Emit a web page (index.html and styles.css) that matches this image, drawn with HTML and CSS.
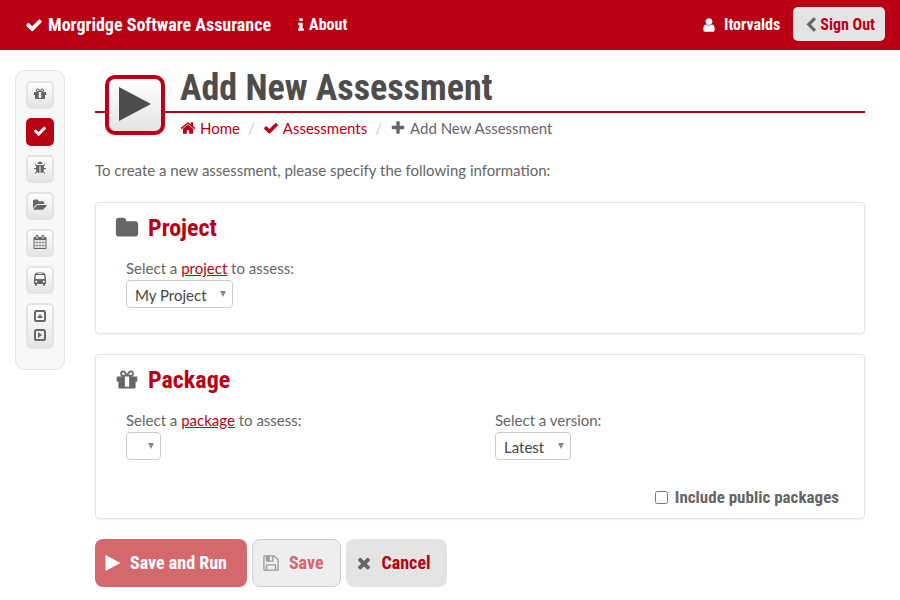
FILE: index.html
```html
<!DOCTYPE html>
<html lang="en">
<head>
<meta charset="utf-8">
<meta name="viewport" content="width=device-width, initial-scale=1">
<title>Add New Assessment</title>
<link rel="stylesheet" href="styles.css">
</head>
<body>
<svg class="sprite" aria-hidden="true">
  <symbol id="check" viewBox="0 0 1792 1792"><path d="M1671 566q0 40-28 68l-724 724-136 136q-28 28-68 28t-68-28l-136-136-362-362q-28-28-28-68t28-68l136-136q28-28 68-28t68 28l294 295 656-657q28-28 68-28t68 28l136 136q28 28 28 68z"/></symbol>
  <symbol id="info" viewBox="0 0 1792 1792"><path d="M1216 1344v128q0 26-19 45t-45 19h-512q-26 0-45-19t-19-45v-128q0-26 19-45t45-19h64v-384h-64q-26 0-45-19t-19-45v-128q0-26 19-45t45-19h384q26 0 45 19t19 45v576h64q26 0 45 19t19 45zm-128-1152v192q0 26-19 45t-45 19h-256q-26 0-45-19t-19-45v-192q0-26 19-45t45-19h256q26 0 45 19t19 45z"/></symbol>
  <symbol id="user" viewBox="0 0 1792 1792"><path d="M1536 1399q0 109-62.5 187t-150.5 78h-854q-88 0-150.5-78t-62.5-187q0-85 8.5-160.5t31.500-152 58.500-131 94-89 134.500-34.500q131 128 313 128t313-128q76 0 134.500 34.500t94 89 58.500 131 31.500 152 8.500 160.500zm-256-887q0 159-112.500 271.500t-271.500 112.500-271.500-112.500-112.500-271.500 112.500-271.500 271.500-112.500 271.500 112.500 112.500 271.500z"/></symbol>
  <symbol id="chevron" viewBox="0 0 1792 1792"><path d="M1427 301l-531 531 531 531q19 19 19 45t-19 45l-166 166q-19 19-45 19t-45-19l-742-742q-19-19-19-45t19-45l742-742q19-19 45-19t45 19l166 166q19 19 19 45t-19 45z"/></symbol>
  <symbol id="home" viewBox="0 0 1792 1792"><path d="M1472 992v480q0 26-19 45t-45 19h-384v-384h-256v384h-384q-26 0-45-19t-19-45v-480q0-1 .5-3t.5-3l575-474 575 474q1 2 1 6zm223-69l-62 74q-8 9-21 11h-3q-13 0-21-7l-692-577-692 577q-12 8-24 7-13-2-21-11l-62-74q-8-10-7-23.5t11-21.5l719-599q32-26 76-26t76 26l244 204v-195q0-14 9-23t23-9h192q14 0 23 9t9 23v408l219 182q10 8 11 21.5t-7 23.5z"/></symbol>
  <symbol id="plus" viewBox="0 0 1792 1792"><path d="M1600 736v192q0 40-28 68t-68 28h-416v416q0 40-28 68t-68 28h-192q-40 0-68-28t-28-68v-416h-416q-40 0-68-28t-28-68v-192q0-40 28-68t68-28h416v-416q0-40 28-68t68-28h192q40 0 68 28t28 68v416h416q40 0 68 28t28 68z"/></symbol>
  <symbol id="times" viewBox="0 0 1792 1792"><path d="M1490 1322q0 40-28 68l-136 136q-28 28-68 28t-68-28l-294-294-294 294q-28 28-68 28t-68-28l-136-136q-28-28-28-68t28-68l294-294-294-294q-28-28-28-68t28-68l136-136q28-28 68-28t68 28l294 294 294-294q28-28 68-28t68 28l136 136q28 28 28 68t-28 68l-294 294 294 294q28 28 28 68z"/></symbol>
  <symbol id="folder" viewBox="0 0 1792 1792"><path d="M1728 608v704q0 92-66 158t-158 66h-1216q-92 0-158-66t-66-158v-960q0-92 66-158t158-66h320q92 0 158 66t66 158v32h672q92 0 158 66t66 158z"/></symbol>
  <symbol id="gift" viewBox="0 0 1792 1792"><path d="M1056 1356v-716h-320v716q0 25 18 38.5t46 13.5h192q28 0 46-13.5t18-38.5zm-456-844h195l-126-161q-26-31-69-31-40 0-68 28t-28 68 28 68 68 28zm688-96q0-40-28-68t-68-28q-43 0-69 31l-125 161h194q40 0 68-28t28-68zm376 256v320q0 14-9 23t-23 9h-96v416q0 40-28 68t-68 28h-1088q-40 0-68-28t-28-68v-416h-96q-14 0-23-9t-9-23v-320q0-14 9-23t23-9h440q-93 0-158.5-65.5t-65.5-158.5 65.5-158.5 158.5-65.5q107 0 168 77l128 165 128-165q61-77 168-77 93 0 158.5 65.5t65.5 158.5-65.5 158.5-158.5 65.5h440q14 0 23 9t9 23z"/></symbol>
  <symbol id="bug" viewBox="0 0 1792 1792"><path d="M1696 960q0 26-19 45t-45 19h-224q0 171-67 290l208 209q19 19 19 45t-19 45q-18 19-45 19t-45-19l-198-197q-5 5-15 13t-42 28.5-65 36.5-82 29-97 13v-896h-128v896q-51 0-101.5-13.5t-87-33-66-39-43.5-32.5l-15-14-183 207q-20 21-48 21-24 0-43-16-19-18-20.5-44.5t15.5-46.5l202-227q-58-114-58-274h-224q-26 0-45-19t-19-45 19-45 45-19h224v-294l-173-173q-19-19-19-45t19-45 45-19 45 19l173 173h844l173-173q19-19 45-19t45 19 19 45-19 45l-173 173v294h224q26 0 45 19t19 45zm-480-576h-640q0-133 93.5-226.5t226.5-93.5 226.5 93.5 93.5 226.5z"/></symbol>
  <symbol id="folder-open" viewBox="0 0 1920 1792"><path d="M1879 952q0 31-31 66l-336 396q-43 51-120.5 86.5t-143.5 35.5h-1088q-34 0-60.5-13t-26.5-43q0-31 31-66l336-396q43-51 120.5-86.5t143.5-35.5h1088q34 0 60.5 13t26.5 43zm-343-344v160h-832q-94 0-197 47.5t-164 119.5l-337 396-5 6q0-4-.5-12.5t-.5-12.5v-960q0-92 66-158t158-66h320q92 0 158 66t66 158v32h544q92 0 158 66t66 158z"/></symbol>
  <symbol id="calendar" viewBox="0 0 1792 1792"><path d="M192 1664h288v-288h-288v288zm352 0h320v-288h-320v288zm-352-352h288v-320h-288v320zm352 0h320v-320h-320v320zm-352-384h288v-288h-288v288zm736 736h320v-288h-320v288zm-384-736h320v-288h-320v288zm768 736h288v-288h-288v288zm-384-352h320v-320h-320v320zm-352-864v-288q0-13-9.5-22.5t-22.5-9.5h-64q-13 0-22.5 9.5t-9.5 22.5v288q0 13 9.5 22.5t22.5 9.5h64q13 0 22.5-9.5t9.5-22.5zm736 864h288v-320h-288v320zm-384-384h320v-288h-320v288zm384 0h288v-288h-288v288zm32-480v-288q0-13-9.5-22.5t-22.5-9.5h-64q-13 0-22.5 9.5t-9.5 22.5v288q0 13 9.5 22.5t22.5 9.5h64q13 0 22.5-9.5t9.5-22.5zm384-64v1280q0 52-38 90t-90 38h-1408q-52 0-90-38t-38-90v-1280q0-52 38-90t90-38h128v-96q0-66 47-113t113-47h64q66 0 113 47t47 113v96h384v-96q0-66 47-113t113-47h64q66 0 113 47t47 113v96h128q52 0 90 38t38 90z"/></symbol>
  <symbol id="bus" viewBox="0 0 14 14"><path fill-rule="evenodd" d="M4 .5h6q2 .3 2.300 2L13 6.500V12h-1v1q0 1-1 1t-1-1v-1H4v1q0 1-1 1t-1-1v-1H1V6.500L1.700 2.500Q2 .8 4 .5zM4.500 1.300v.8h5v-.8zM3 3L2.400 7h9.200L11 3zM3.200 8.500a1 1 0 1 0 .01 0zM10.800 8.500a1 1 0 1 0 .01 0z"/></symbol>
  <symbol id="caret-up" viewBox="0 0 12 12"><rect x="1" y="1" width="10" height="10" rx="1.500" fill="none" stroke="currentColor" stroke-width="2"/><path d="M3 8L6 4l3 4z"/></symbol>
  <symbol id="caret-right" viewBox="0 0 12 12"><rect x="1" y="1" width="10" height="10" rx="1.500" fill="none" stroke="currentColor" stroke-width="2"/><path d="M4 3l4 3-4 3z"/></symbol>
  <symbol id="play" viewBox="0 0 32 34"><path d="M0 0l32 17L0 34z"/></symbol>
  <symbol id="save" viewBox="0 0 1792 1792"><path d="M512 1536h768v-384h-768v384zm896 0h128v-896q0-14-10-38.5t-20-34.5l-281-281q-10-10-34-20t-39-10v416q0 40-28 68t-68 28h-576q-40 0-68-28t-28-68v-416h-128v1280h128v-416q0-40 28-68t68-28h832q40 0 68 28t28 68v416zm-384-928v-320q0-13-9.5-22.5t-22.5-9.5h-192q-13 0-22.5 9.5t-9.5 22.5v320q0 13 9.5 22.5t22.5 9.5h192q13 0 22.5-9.5t9.5-22.5zm640 32v928q0 40-28 68t-68 28h-1344q-40 0-68-28t-28-68v-1344q0-40 28-68t68-28h928q40 0 88 20t76 48l280 280q28 28 48 76t20 88z"/></symbol>
</svg>

<header class="navbar">
  <a class="brand" href="#"><svg class="icon-18"><use href="#check"/></svg>Morgridge Software Assurance</a>
  <a class="nav-link" href="#"><svg class="icon-16"><use href="#info"/></svg>About</a>
  <a class="nav-link account" href="#"><svg class="icon-16"><use href="#user"/></svg>ltorvalds</a>
  <button class="sign-out" type="button"><svg class="icon-16"><use href="#chevron"/></svg>Sign Out</button>
</header>

<div class="page">
  <nav class="sidebar" aria-label="Main">
    <a class="side-item" href="#" aria-label="Packages"><svg class="icon-14"><use href="#gift"/></svg></a>
    <a class="side-item active" href="#" aria-label="Assessments"><svg class="icon-14"><use href="#check"/></svg></a>
    <a class="side-item" href="#" aria-label="Results"><svg class="icon-14"><use href="#bug"/></svg></a>
    <a class="side-item" href="#" aria-label="Projects"><svg class="icon-14"><use href="#folder-open"/></svg></a>
    <a class="side-item" href="#" aria-label="Schedules"><svg class="icon-14"><use href="#calendar"/></svg></a>
    <a class="side-item" href="#" aria-label="Runs"><svg class="icon-14"><use href="#bus"/></svg></a>
    <button class="side-item toggles" type="button" aria-label="Resize sidebar"><svg class="icon-12"><use href="#caret-up"/></svg><svg class="icon-12"><use href="#caret-right"/></svg></button>
  </nav>

  <main class="content">
    <div class="page-head">
      <div class="page-icon"><svg class="icon-play"><use href="#play"/></svg></div>
      <h1 class="page-title">Add New Assessment</h1>
      <nav class="breadcrumb" aria-label="Breadcrumb">
        <a class="crumb" href="#"><svg class="icon-16"><use href="#home"/></svg>Home</a>
        <span class="slash">/</span>
        <a class="crumb" href="#"><svg class="icon-16"><use href="#check"/></svg>Assessments</a>
        <span class="slash">/</span>
        <span class="crumb"><svg class="icon-16"><use href="#plus"/></svg>Add New Assessment</span>
      </nav>
    </div>

    <p class="intro">To create a new assessment, please specify the following information:</p>

    <form>
      <section class="panel">
        <h2 class="panel-title"><svg class="icon-24"><use href="#folder"/></svg>Project</h2>
        <div class="fields">
          <div class="field">
            <label for="project">Select a <a class="text-link" href="#">project</a> to assess:</label>
            <div class="select-box"><select id="project"><option>My Project</option></select></div>
          </div>
        </div>
      </section>

      <section class="panel">
        <h2 class="panel-title"><svg class="icon-24"><use href="#gift"/></svg>Package</h2>
        <div class="fields">
          <div class="field">
            <label for="package">Select a <a class="text-link" href="#">package</a> to assess:</label>
            <div class="select-box"><select id="package"><option></option></select></div>
          </div>
          <div class="field">
            <label for="version">Select a version:</label>
            <div class="select-box"><select id="version"><option>Latest</option></select></div>
          </div>
        </div>
        <label class="public"><input type="checkbox">Include public packages</label>
      </section>

      <div class="actions">
        <button class="btn primary" type="submit" disabled><svg class="icon-16"><use href="#play"/></svg>Save and Run</button>
        <button class="btn outlined" type="button" disabled><svg class="icon-18"><use href="#save"/></svg>Save</button>
        <button class="btn" type="button"><svg class="icon-18"><use href="#times"/></svg>Cancel</button>
      </div>
    </form>
  </main>
</div>
</body>
</html>
```
FILE: styles.css
```css
:root {
  --red: #ba0015;
  --gray: #666;
  --light: #e4e4e4;
  --narrow: "Roboto Condensed", Roboto, sans-serif;
}

* { box-sizing: border-box; }

body {
  margin: 0;
  background: #fff;
  color: var(--gray);
  font: 15px/20px Lato, "Gill Sans", sans-serif;
}

a { color: var(--red); text-decoration: none; }
button { font: inherit; border: 0; margin: 0; }
svg { fill: currentColor; flex: none; }

.sprite { display: none; }
.icon-12 { width: 12px; height: 12px; }
.icon-14 { width: 14px; height: 14px; }
.icon-16 { width: 16px; height: 16px; }
.icon-18 { width: 18px; height: 18px; }
.icon-24 { width: 24px; height: 24px; }
.icon-play { width: 32px; height: 34px; }

.navbar {
  display: flex;
  align-items: center;
  min-height: 50px;
  padding: 0 15px 1px 25px;
  background: var(--red);
  border-bottom: 1px solid #a80013;
  font-family: var(--narrow);
  font-weight: bold;
}
.navbar a { color: #fff; display: flex; align-items: center; padding-top: 2px; }
.brand { font-size: 18px; gap: 5px; }
.nav-link { font-size: 16px; margin-left: 22px; }
.account { margin-left: auto; gap: 7px; }
.sign-out {
  display: flex;
  align-items: center;
  gap: 1px;
  min-height: 34px;
  margin-left: 13px;
  padding: 2px 10px 0;
  border-radius: 5px;
  background: var(--light);
  color: var(--red);
  font-size: 16px;
}
.sign-out svg, .btn svg { color: var(--gray); }

.page {
  display: flex;
  align-items: flex-start;
  gap: 30px;
  padding: 20px 35px 0 15px;
}

.sidebar {
  display: flex;
  flex-direction: column;
  align-items: center;
  gap: 9px;
  width: 50px;
  padding: 10px 0 20px;
  border: 1px solid var(--light);
  border-radius: 10px;
  background: #f8f8f8;
}
.side-item {
  display: flex;
  flex-direction: column;
  align-items: center;
  justify-content: center;
  gap: 7px;
  width: 28px;
  min-height: 28px;
  padding: 0 0 2px;
  border: 2px solid var(--light);
  border-radius: 5px;
  background: linear-gradient(#fff, #e4e4e4);
  color: var(--gray);
}
.side-item.active { background: var(--red); border-color: var(--red); color: #fff; }
.toggles { min-height: 46px; }

.content { flex: 1; min-width: 0; }

.page-head {
  display: grid;
  grid-template-columns: 60px 1fr;
  grid-template-rows: 43px 26px;
  column-gap: 15px;
  padding-left: 10px;
  background: linear-gradient(var(--red), var(--red)) 0 41px / 100% 2px no-repeat;
}
.page-icon {
  grid-row: 1 / 3;
  display: flex;
  align-items: center;
  justify-content: center;
  width: 60px;
  height: 60px;
  margin-top: 5px;
  padding-bottom: 2px;
  border: 4px solid var(--red);
  border-radius: 10px;
  background: linear-gradient(#fff, #e4e4e4);
  color: #4d4d4d;
}
.page-title {
  margin: 0;
  color: #4d4d4d;
  font: bold 36px/36px var(--narrow);
}
.breadcrumb { display: flex; align-items: center; padding-top: 4px; }
.crumb { display: flex; align-items: center; gap: 4px; }
.slash { color: #ccc; padding: 0 8px; }

.intro { margin: 21px 0 22px; }

.panel {
  margin-bottom: 20px;
  padding: 10px 25px 25px 19px;
  border: 1px solid var(--light);
  border-radius: 4px;
  box-shadow: 0 1px 1px rgba(0, 0, 0, .05);
}
.panel-title {
  display: flex;
  align-items: center;
  gap: 9px;
  margin: 0 0 15px;
  color: var(--red);
  font: bold 24px/30px var(--narrow);
}
.panel-title svg { color: var(--gray); }

.fields { display: grid; grid-template-columns: 1fr 1fr; padding-left: 11px; column-gap: 25px; }
.text-link { text-decoration: underline; }

.select-box { position: relative; width: fit-content; margin-top: 2px; }
.select-box::after {
  content: "";
  position: absolute;
  right: 7px;
  top: 11px;
  border: 3px solid transparent;
  border-top: 6px solid #888;
  border-bottom: 0;
  pointer-events: none;
}
select {
  display: block;
  appearance: none;
  height: 28px;
  padding: 1px 25px 0 8px;
  border: 1px solid #ccc;
  border-radius: 4px;
  background: #fff;
  color: #444;
  font: inherit;
}

.public {
  display: flex;
  align-items: center;
  justify-content: flex-end;
  gap: 7px;
  margin: 27px 0 -14px;
  font: bold 17px/20px var(--narrow);
}
.public input { width: 13px; height: 13px; margin: 0; }

.actions { display: flex; gap: 5px; }
.btn {
  display: flex;
  align-items: center;
  gap: 9px;
  min-height: 48px;
  padding: 0 16px 0 9px;
  border-radius: 8px;
  background: var(--light);
  color: var(--red);
  font: bold 18px/24px var(--narrow);
}
.btn.primary { background: #d5686c; color: #fff; padding: 0 20px 0 10px; }
.btn.primary svg { color: #fff; }
.btn.outlined { border: 1px solid #ccc; background: #eee; color: #d5666d; }
.btn.outlined svg { color: #999; }
```
